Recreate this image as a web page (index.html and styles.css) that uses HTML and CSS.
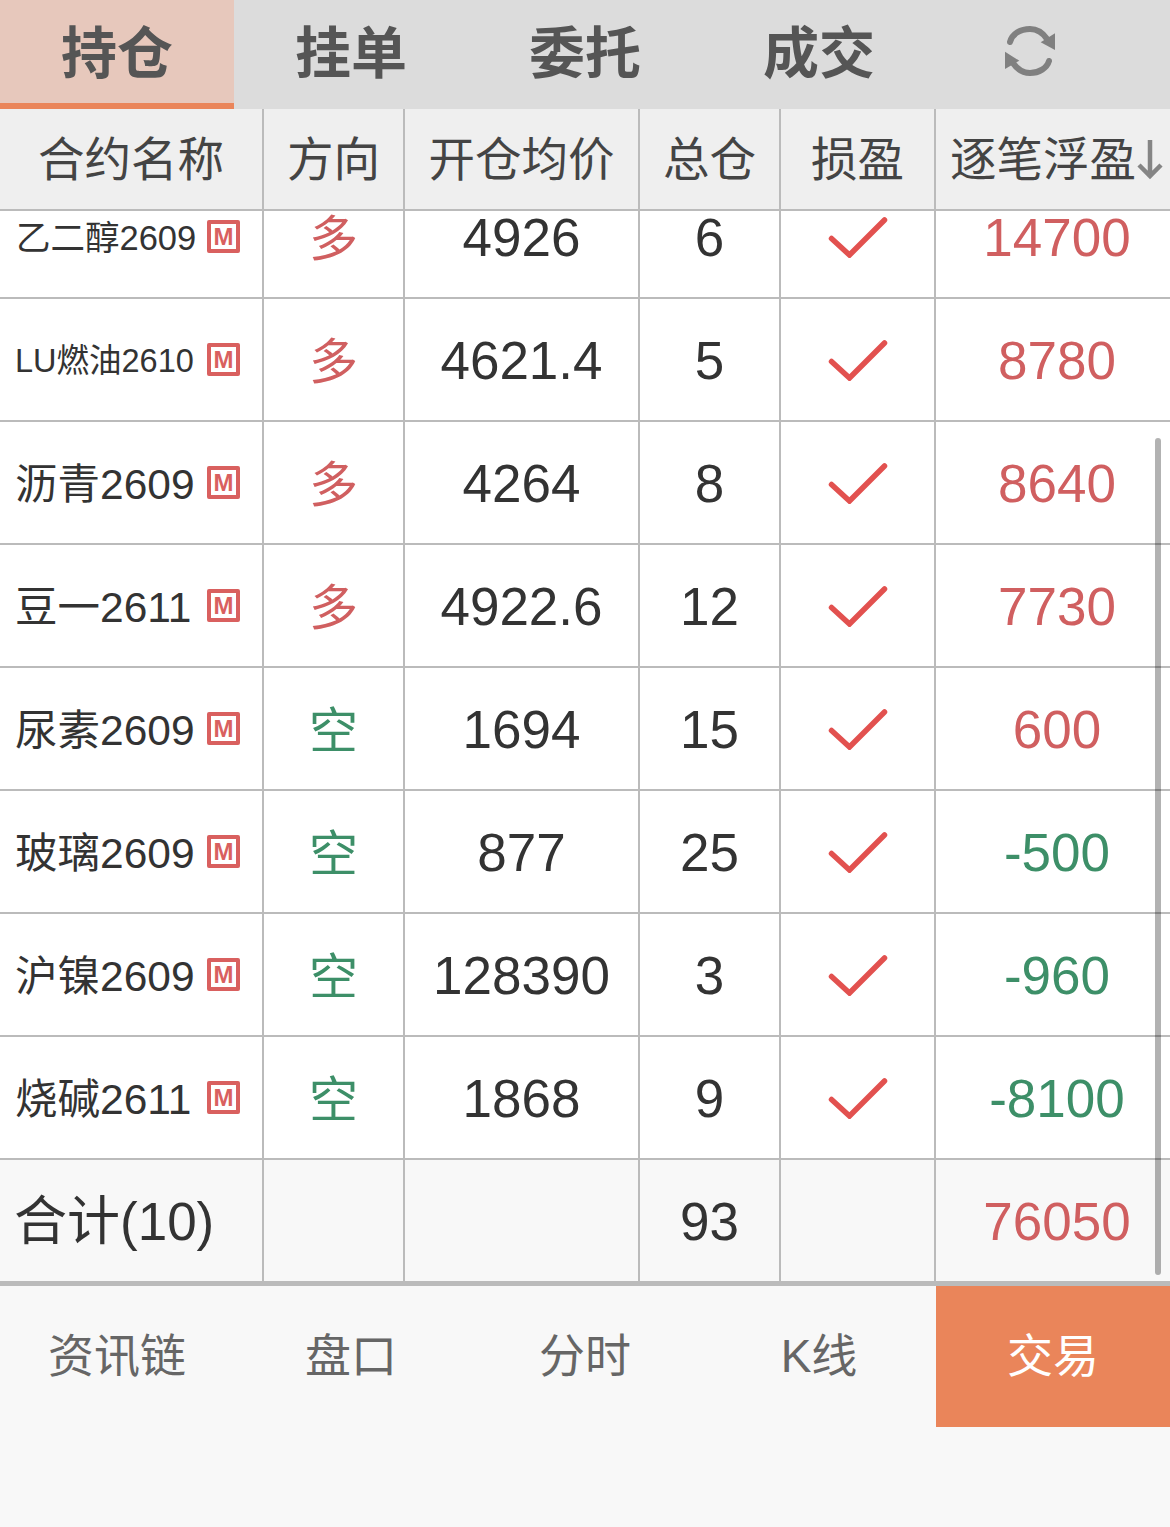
FILE: index.html
```html
<!DOCTYPE html>
<html lang="zh-CN">
<head>
    <meta charset="UTF-8">
    <meta name="viewport" content="width=device-width, initial-scale=1.0">
    <title>持仓</title>
    <link rel="stylesheet" href="styles.css">
</head>
<body>
    <svg class="defs" width="0" height="0">
        <symbol id="check" viewBox="0 0 60 44">
            <polyline points="3.5,24.5 21.5,41 56.5,6" fill="none" stroke="#e2514f" stroke-width="5.5" stroke-linecap="round" stroke-linejoin="miter"/>
        </symbol>
    </svg>

    <div class="tabs">
        <div class="tab tab-active">持仓</div>
        <div class="tab">挂单</div>
        <div class="tab">委托</div>
        <div class="tab">成交</div>
        <div class="tab tab-refresh">
            <svg class="refresh-icon" viewBox="0 0 50 50">
                <path d="M5 16 C7 8 15 3 25 3 C32 3 38 7 42 13" fill="none" stroke="#808080" stroke-width="6" stroke-linecap="round"/>
                <path d="M50 7.3 L50 24 L35.7 16.3 Z" fill="#808080"/>
                <path d="M44 35 C42 42 34 47 25 47 C18 47 12 43 8 37" fill="none" stroke="#808080" stroke-width="6" stroke-linecap="round"/>
                <path d="M0 25.7 L0 43 L14.3 34.7 Z" fill="#808080"/>
            </svg>
        </div>
    </div>

    <div class="row row-head">
        <div class="cell">合约名称</div>
        <div class="cell">方向</div>
        <div class="cell">开仓均价</div>
        <div class="cell">总仓</div>
        <div class="cell">损盈</div>
        <div class="cell cell-last">逐笔浮盈<svg class="sort-icon" viewBox="0 0 28 42"><path d="M14 2 V38 M3 27 L14 38 L25 27" fill="none" stroke="#858585" stroke-width="4.5"/></svg></div>
    </div>

    <div class="table-body">
        <div class="list">
            <div class="list-inner">
                <div class="row">
                    <div class="cell cell-name name-small"><span>乙二醇2609</span><i class="badge">M</i></div>
                    <div class="cell dir up">多</div>
                    <div class="cell">4926</div>
                    <div class="cell">6</div>
                    <div class="cell"><svg class="check"><use href="#check"/></svg></div>
                    <div class="cell cell-last up">14700</div>
                </div>
                <div class="row">
                    <div class="cell cell-name name-tiny"><span>LU燃油2610</span><i class="badge">M</i></div>
                    <div class="cell dir up">多</div>
                    <div class="cell">4621.4</div>
                    <div class="cell">5</div>
                    <div class="cell"><svg class="check"><use href="#check"/></svg></div>
                    <div class="cell cell-last up">8780</div>
                </div>
                <div class="row">
                    <div class="cell cell-name"><span>沥青2609</span><i class="badge">M</i></div>
                    <div class="cell dir up">多</div>
                    <div class="cell">4264</div>
                    <div class="cell">8</div>
                    <div class="cell"><svg class="check"><use href="#check"/></svg></div>
                    <div class="cell cell-last up">8640</div>
                </div>
                <div class="row">
                    <div class="cell cell-name"><span>豆一2611</span><i class="badge">M</i></div>
                    <div class="cell dir up">多</div>
                    <div class="cell">4922.6</div>
                    <div class="cell">12</div>
                    <div class="cell"><svg class="check"><use href="#check"/></svg></div>
                    <div class="cell cell-last up">7730</div>
                </div>
                <div class="row">
                    <div class="cell cell-name"><span>尿素2609</span><i class="badge">M</i></div>
                    <div class="cell dir down">空</div>
                    <div class="cell">1694</div>
                    <div class="cell">15</div>
                    <div class="cell"><svg class="check"><use href="#check"/></svg></div>
                    <div class="cell cell-last up">600</div>
                </div>
                <div class="row">
                    <div class="cell cell-name"><span>玻璃2609</span><i class="badge">M</i></div>
                    <div class="cell dir down">空</div>
                    <div class="cell">877</div>
                    <div class="cell">25</div>
                    <div class="cell"><svg class="check"><use href="#check"/></svg></div>
                    <div class="cell cell-last down">-500</div>
                </div>
                <div class="row">
                    <div class="cell cell-name"><span>沪镍2609</span><i class="badge">M</i></div>
                    <div class="cell dir down">空</div>
                    <div class="cell">128390</div>
                    <div class="cell">3</div>
                    <div class="cell"><svg class="check"><use href="#check"/></svg></div>
                    <div class="cell cell-last down">-960</div>
                </div>
                <div class="row">
                    <div class="cell cell-name"><span>烧碱2611</span><i class="badge">M</i></div>
                    <div class="cell dir down">空</div>
                    <div class="cell">1868</div>
                    <div class="cell">9</div>
                    <div class="cell"><svg class="check"><use href="#check"/></svg></div>
                    <div class="cell cell-last down">-8100</div>
                </div>
            </div>
        </div>

        <div class="row row-total">
            <div class="cell cell-name">合计(10)</div>
            <div class="cell"></div>
            <div class="cell"></div>
            <div class="cell">93</div>
            <div class="cell"></div>
            <div class="cell cell-last up">76050</div>
        </div>

        <div class="scrollbar"></div>
    </div>

    <div class="nav">
        <div class="nav-item">资讯链</div>
        <div class="nav-item">盘口</div>
        <div class="nav-item">分时</div>
        <div class="nav-item">K线</div>
        <div class="nav-item nav-active">交易</div>
    </div>
</body>
</html>
```

FILE: styles.css
```css
* {
    box-sizing: border-box;
}

body {
    margin: 0;
    height: 1527px;
    overflow: hidden;
    background-color: #f8f8f8;
    color: #333333;
    font-family: "Liberation Sans", "Noto Sans CJK SC", sans-serif;
}

.defs {
    position: absolute;
}

/* top tabs */
.tabs {
    display: grid;
    grid-template-columns: repeat(5, 234px);
    height: 109px;
    background-color: #dcdcdc;
}

.tab {
    display: flex;
    align-items: center;
    justify-content: center;
    padding-bottom: 12px;
    font-size: 56px;
    font-weight: 700;
    color: #555555;
}

.tab-active {
    padding-bottom: 6px;
    background-color: #e7c8bc;
    border-bottom: 6px solid #ea855a;
}

.tab-refresh {
    padding: 0 46px 7px 0;
}

.refresh-icon {
    width: 50px;
    height: 50px;
}

/* table rows */
.row {
    display: grid;
    grid-template-columns: 264px 141px 235px 141px 155px 234px;
    height: 123px;
    background-color: #ffffff;
    border-bottom: 2px solid #bbbbbb;
}

.cell {
    display: flex;
    align-items: center;
    justify-content: center;
    padding-top: 2px;
    border-right: 2px solid #bbbbbb;
    font-size: 53px;
}

.cell-last {
    border-right: 0;
    padding-left: 8px;
}

.cell-name {
    justify-content: space-between;
    padding: 0 22px 4px 15px;
    font-size: 42.5px;
}

.name-small {
    padding-left: 16px;
    font-size: 34.5px;
}

.name-tiny {
    font-size: 32.5px;
}

.row-head {
    height: 102px;
    background-color: #efefef;
}

.row-head .cell {
    padding-bottom: 10px;
    font-size: 46.5px;
    color: #444444;
}

.row-total {
    height: 126px;
    background-color: #f8f8f8;
    border-bottom-width: 5px;
}

.row-total .cell-name {
    padding: 0 22px 8px 14px;
    font-size: 53px;
}

.up {
    color: #d05f60;
}

.down {
    color: #3d8f68;
}

.dir {
    padding-bottom: 7px;
    font-size: 49px;
}

.badge {
    display: flex;
    align-items: center;
    justify-content: center;
    flex: none;
    width: 33px;
    height: 33px;
    margin-top: 4px;
    border: 4px solid #d9605f;
    border-radius: 2px;
    font-size: 24px;
    font-weight: 700;
    font-style: normal;
    color: #d9605f;
}

.check {
    width: 60px;
    height: 44px;
    margin-bottom: 4px;
}

.sort-icon {
    flex: none;
    width: 28px;
    height: 42px;
    margin-top: 8px;
}

/* scrolled list */
.table-body {
    position: relative;
}

.list {
    height: 949px;
    overflow: hidden;
}

.list-inner {
    margin-top: -35px;
}

.scrollbar {
    position: absolute;
    top: 227px;
    right: 9px;
    width: 6px;
    height: 837px;
    border-radius: 3px;
    background-color: rgba(0, 0, 0, 0.3);
}

/* bottom nav */
.nav {
    display: grid;
    grid-template-columns: repeat(5, 234px);
    height: 141px;
}

.nav-item {
    display: flex;
    align-items: center;
    justify-content: center;
    padding-bottom: 10px;
    font-size: 46px;
    color: #666666;
}

.nav-active {
    background-color: #ea855a;
    color: #ffffff;
}
```
